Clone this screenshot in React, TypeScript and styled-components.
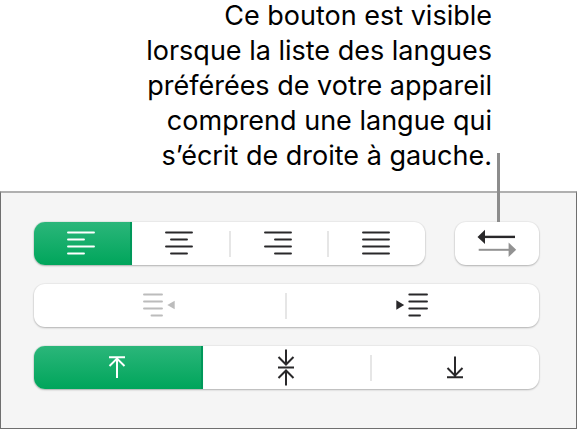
import React, { useState } from 'react';
import styled, { createGlobalStyle, css } from 'styled-components';

const GlobalStyle = createGlobalStyle`
  *, *::before, *::after { box-sizing: border-box; }
  body {
    margin: 0;
    background: #ffffff;
    font-family: Inter, "Liberation Sans", sans-serif;
  }
`;

const Page = styled.main`
  display: flex;
  flex-direction: column;
`;

const Caption = styled.p`
  margin: -2px 85px 18px auto;
  max-width: 360px;
  color: #000000;
  font-size: 27px;
  line-height: 35px;
  text-align: right;
`;

const Panel = styled.section`
  display: flex;
  flex-direction: column;
  gap: 19px;
  padding: 29px 37px 39px 33px;
  background: #f5f5f5;
  border: 1px solid #6f6f6f;
  border-top: 2px solid #b0b0b0;
`;

const Row = styled.div`
  display: flex;
  gap: 30px;
`;

const surface = css`
  height: 43px;
  border-radius: 11px;
  background: #ffffff;
  box-shadow: 0 0 1px 1px rgba(0, 0, 0, 0.04), 0 1px 2px rgba(0, 0, 0, 0.24);
`;

const Group = styled.div`
  ${surface}
  display: flex;
  flex: 1;
  align-items: center;
`;

const Segment = styled.button<{ $divided?: boolean }>`
  display: flex;
  flex: 1 1 0;
  align-items: center;
  justify-content: center;
  height: 100%;
  padding: 0 4px 1px 0;
  border: 0;
  color: #29282a;
  background: ${({ $divided }) =>
    $divided ? 'linear-gradient(#e6e6e6, #e6e6e6) right center / 2px 26px no-repeat' : 'transparent'};

  &:first-child { border-radius: 11px 0 0 11px; }
  &:last-child { border-radius: 0 11px 11px 0; padding-right: 2px; }
  &:disabled { color: #bcbcbc; padding-right: 2px; }
  &[aria-pressed='true'] {
    color: #ffffff;
    background: linear-gradient(#2bb67a, #00a55b);
    box-shadow: inset -2px 0 #00985a, 0 0 1px rgba(0, 165, 91, 0.3);
  }
`;

const DirectionButton = styled.button`
  ${surface}
  position: relative;
  display: flex;
  align-items: center;
  justify-content: center;
  width: 84px;
  padding: 0 0 1px;
  border: 0;
`;

const CalloutLine = styled.span`
  position: absolute;
  bottom: 100%;
  left: 50%;
  width: 3px;
  height: 69px;
  background: #8c8c8c;
`;

const Icon = styled.svg`
  display: block;
  flex: none;
  fill: none;
  stroke: currentColor;
  stroke-width: 2;
`;

type LinesProps = { d: string };

const AlignIcon = ({ d }: LinesProps) => (
  <Icon width="28" height="24" viewBox="0 0 28 24" aria-hidden="true">
    <path d={d} strokeLinecap="round" strokeWidth="1.9" />
  </Icon>
);

const OutdentIcon = () => (
  <Icon width="32" height="24" viewBox="0 0 32 24" aria-hidden="true">
    <path d="M1 1.5H19M1 8.5H19M1 15.5H19M8.5 22.5H19" strokeLinecap="round" strokeWidth="1.9" />
    <path d="M31.7 7.7V16.3L24.3 12Z" fill="currentColor" stroke="none" />
  </Icon>
);

const IndentIcon = () => (
  <Icon width="32" height="24" viewBox="0 0 32 24" aria-hidden="true">
    <path d="M13.3 1.5H31M13.3 8.5H31M13.3 15.5H31M13.3 22.5H24" strokeLinecap="round" strokeWidth="1.9" />
    <path d="M0.3 7.3V16.7L8.2 12Z" fill="currentColor" stroke="none" />
  </Icon>
);

const TopIcon = () => (
  <Icon width="18" height="38" viewBox="0 0 18 38" aria-hidden="true">
    <path d="M1 9.2H17M9 10V30M1.5 18L9 10.6L16.5 18" />
  </Icon>
);

const MiddleIcon = () => (
  <Icon width="18" height="38" viewBox="0 0 18 38" aria-hidden="true">
    <path d="M1 19.5H17M9 1.5V17M1.5 9L9 16.5L16.5 9M9 37.5V22M1.5 30L9 22.5L16.5 30" />
  </Icon>
);

const BottomIcon = () => (
  <Icon width="18" height="38" viewBox="0 0 18 38" aria-hidden="true">
    <path d="M1 29.3H17M9 8.5V29M1.5 20L9 27.6L16.5 20" />
  </Icon>
);

const DirectionIcon = () => (
  <Icon width="40" height="28" viewBox="0 0 40 28" aria-hidden="true">
    <path d="M7 7.9H38" stroke="#29282a" strokeWidth="2.4" />
    <path d="M8 0.8V15L0.5 7.9Z" fill="#29282a" stroke="none" />
    <path d="M1.7 20.8H33" stroke="#929292" />
    <path d="M31.6 13.6V28L39.2 20.8Z" fill="#929292" stroke="none" />
  </Icon>
);

const alignments = [
  { label: 'Aligner à gauche', d: 'M1 1.5H27M1 8.5H17M1 15.5H27M1 22.5H17' },
  { label: 'Centrer', d: 'M1 1.5H27M6 8.5H22M1 15.5H27M6 22.5H22' },
  { label: 'Aligner à droite', d: 'M1 1.5H27M11 8.5H27M1 15.5H27M11 22.5H27' },
  { label: 'Justifier', d: 'M1 1.5H27M1 8.5H27M1 15.5H27M1 22.5H27' },
];

const verticals = [
  { label: 'Aligner en haut', Glyph: TopIcon },
  { label: 'Aligner au milieu', Glyph: MiddleIcon },
  { label: 'Aligner en bas', Glyph: BottomIcon },
];

export default function App() {
  const [align, setAlign] = useState(0);
  const [vertical, setVertical] = useState(0);

  return (
    <Page>
      <GlobalStyle />
      <Caption id="direction-note">
        Ce bouton est visible
        <br />
        lorsque la liste des langues
        <br />
        préférées de votre appareil
        <br />
        comprend une langue qui
        <br />
        s’écrit de droite à gauche.
      </Caption>
      <Panel aria-label="Alignement">
        <Row>
          <Group role="group" aria-label="Alignement horizontal">
            {alignments.map(({ label, d }, i) => (
              <Segment
                key={label}
                type="button"
                aria-label={label}
                aria-pressed={align === i}
                $divided={i < alignments.length - 1 && align !== i + 1}
                onClick={() => setAlign(i)}
              >
                <AlignIcon d={d} />
              </Segment>
            ))}
          </Group>
          <DirectionButton type="button" aria-label="Sens du texte" aria-describedby="direction-note">
            <CalloutLine />
            <DirectionIcon />
          </DirectionButton>
        </Row>
        <Row>
          <Group role="group" aria-label="Retrait">
            <Segment type="button" aria-label="Diminuer le retrait" disabled $divided>
              <OutdentIcon />
            </Segment>
            <Segment type="button" aria-label="Augmenter le retrait">
              <IndentIcon />
            </Segment>
          </Group>
        </Row>
        <Row>
          <Group role="group" aria-label="Alignement vertical">
            {verticals.map(({ label, Glyph }, i) => (
              <Segment
                key={label}
                type="button"
                aria-label={label}
                aria-pressed={vertical === i}
                $divided={i < verticals.length - 1 && vertical !== i + 1}
                onClick={() => setVertical(i)}
              >
                <Glyph />
              </Segment>
            ))}
          </Group>
        </Row>
      </Panel>
    </Page>
  );
}
